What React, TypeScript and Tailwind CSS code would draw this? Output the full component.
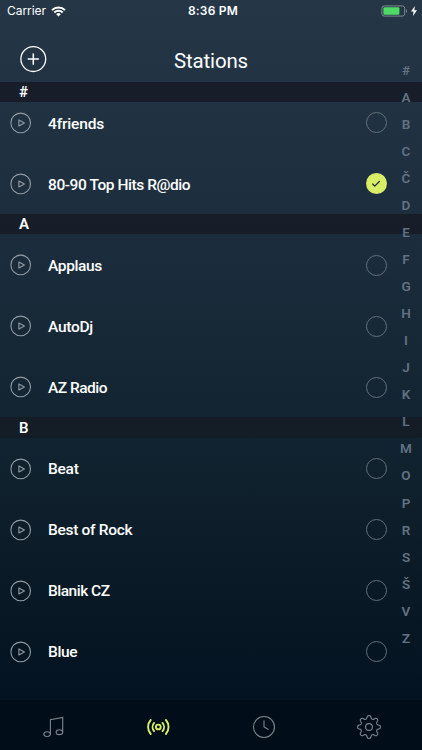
import { Check } from "lucide-react";

type Station = {
  name: string;
  tracking: string;
  selected?: boolean;
};

type Section = {
  letter: string;
  stations: Station[];
};

const sections: Section[] = [
  {
    letter: "#",
    stations: [
      { name: "4friends", tracking: "tracking-[-0.15px]" },
      { name: "80-90 Top Hits R@dio", tracking: "tracking-[-0.43px]", selected: true },
    ],
  },
  {
    letter: "A",
    stations: [
      { name: "Applaus", tracking: "tracking-[-0.36px]" },
      { name: "AutoDj", tracking: "tracking-[-0.3px]" },
      { name: "AZ Radio", tracking: "tracking-[-0.5px]" },
    ],
  },
  {
    letter: "B",
    stations: [
      { name: "Beat", tracking: "tracking-[-0.25px]" },
      { name: "Best of Rock", tracking: "tracking-[-0.3px]" },
      { name: "Blanik CZ", tracking: "tracking-[-0.5px]" },
      { name: "Blue", tracking: "tracking-[-0.4px]" },
    ],
  },
];

const indexLetters = "# A B C Č D E F G H I J K L M O P R S Š V Z".split(" ");

// Outline of a gear with eight rounded teeth, centred in a 24px box
const gearPath =
  Array.from({ length: 160 }, (_, i) => {
    const angle = (i / 160) * Math.PI * 2;
    const radius = 9.95 + 1.6 * Math.tanh(1.7 * Math.cos(angle * 8));
    const x = 12 + radius * Math.sin(angle);
    const y = 12 - radius * Math.cos(angle);
    return `${i === 0 ? "M" : "L"}${x.toFixed(2)} ${y.toFixed(2)}`;
  }).join("") + "Z";

function StatusBar() {
  return (
    <div className="grid h-[22px] grid-cols-3 items-center pl-[7px] pr-[5px] font-['Inter',sans-serif] text-white">
      <div className="flex items-center gap-[5px]">
        <span className="text-[12px] tracking-[-0.05px]">Carrier</span>
        <svg width="15" height="11" viewBox="0 0 15 11" fill="none" stroke="currentColor" strokeWidth="2">
          <path d="M1 4.1a9.2 9.2 0 0 1 13 0" />
          <path d="M3.3 6.5a5.9 5.9 0 0 1 8.4 0" />
          <path d="M7.5 10.6 5.2 8.2a3.3 3.3 0 0 1 4.6 0z" fill="currentColor" stroke="none" />
        </svg>
      </div>
      <span className="pl-[2px] text-center text-[12px] font-semibold tracking-[0.2px]">8:36 PM</span>
      <div className="flex items-center justify-end gap-[3px]">
        <svg width="27" height="12" viewBox="0 0 27 12" fill="none">
          <rect x="0.9" y="0.9" width="22.8" height="10.2" rx="2.4" stroke="#7d8993" />
          <rect x="2.4" y="2.3" width="16" height="7.4" rx="1" fill="#4cd964" />
          <path d="M25 4.2c1.4.5 1.4 3.1 0 3.6z" fill="#7d8993" />
        </svg>
        <svg width="6" height="10" viewBox="0 0 6 10" fill="currentColor">
          <path d="M3.9 0 0 5.6h2.6L1.9 10 6 4.2H3.3z" />
        </svg>
      </div>
    </div>
  );
}

function Header() {
  return (
    <div className="grid h-[60px] grid-cols-3 items-center">
      <div className="pl-[20px] pt-[14px]">
        <svg width="27" height="27" viewBox="0 0 27 27" fill="none" stroke="white" strokeWidth="1.3">
          <circle cx="13.3" cy="13.1" r="12.4" />
          <path d="M13.3 7.5v11.2M7.7 13.1h11.2" strokeWidth="1.5" />
        </svg>
      </div>
      <h1 className="pt-[17px] text-center text-[20.5px] leading-[26px] tracking-[-0.15px]">Stations</h1>
    </div>
  );
}

function StationRow({ station }: { station: Station }) {
  return (
    <li className="flex h-[61px] items-center pl-[10px] pr-[35.5px] pt-[0.6px]">
      <svg width="22" height="22" viewBox="0 0 22 22" fill="none" stroke="#929ba2" strokeLinejoin="round">
        <circle cx="10.7" cy="10.9" r="9.8" strokeWidth="1.1" />
        <path d="M8.9 7.9v6l5.5-3z" strokeWidth="1.1" />
      </svg>
      <span className={`ml-4 flex-1 pt-[3px] text-[15.5px] font-medium ${station.tracking}`}>{station.name}</span>
      {station.selected ? (
        <span className="flex size-[21px] items-center justify-center rounded-full bg-[#d9ee67]">
          <Check size={10} strokeWidth={3} color="#1c2b32" />
        </span>
      ) : (
        <span className="size-[21px] rounded-full border border-[#63707b]" />
      )}
    </li>
  );
}

function StationList() {
  return (
    <div>
      {sections.map((section, i) => (
        <section key={section.letter}>
          <h2 className="relative z-10 flex h-[20.4px] items-center bg-[#151b25]/85 pl-[19px] pt-px text-[15px] font-semibold">
            {section.letter}
          </h2>
          {/* The first row is scrolled partly under its header */}
          <ul className={i === 0 ? "-mt-[10.4px]" : ""}>
            {section.stations.map((station) => (
              <StationRow key={station.name} station={station} />
            ))}
          </ul>
        </section>
      ))}
    </div>
  );
}

function LetterIndex() {
  return (
    <nav className="absolute left-[396px] top-[56.4px] z-20 w-5 text-center text-[13.5px] font-semibold text-[#617283]">
      {indexLetters.map((letter) => (
        <div key={letter} className="flex h-[27.05px] items-center justify-center">
          {letter}
        </div>
      ))}
    </nav>
  );
}

function TabBar() {
  return (
    <div className="grid h-[50.5px] grid-cols-4 items-center justify-items-center bg-[#010e19] pt-[4px] text-[#7c868d]">
      <svg width="24" height="24" viewBox="0 0 24 24" fill="none" stroke="currentColor" strokeWidth="1.1">
        <path d="M9.4 18.9V4.8L21.7 2.4v14.4" />
        <ellipse cx="6.1" cy="19.1" rx="3.3" ry="2.4" />
        <ellipse cx="18.4" cy="17.2" rx="3.3" ry="2.4" />
      </svg>
      <svg width="24" height="24" viewBox="0 0 24 24" fill="none" stroke="#d9ee67" strokeWidth="1.9" strokeLinecap="round">
        <circle cx="12.3" cy="12" r="2.4" />
        <path d="M8.1 7.9a6.2 6.2 0 0 0 0 8.2M16.5 7.9a6.2 6.2 0 0 1 0 8.2" />
        <path d="M4.7 5a10.6 10.6 0 0 0 0 14M19.9 5a10.6 10.6 0 0 1 0 14" />
      </svg>
      <svg width="24" height="24" viewBox="0 0 24 24" fill="none" stroke="currentColor" strokeWidth="1.1">
        <circle cx="12" cy="12" r="10.5" />
        <path d="M12 5.5V12l4.5 2.6" />
      </svg>
      <svg width="24" height="24" viewBox="0 0 24 24" fill="none" stroke="currentColor" strokeWidth="1.1" strokeLinejoin="round">
        <circle cx="12" cy="12" r="3.4" />
        <path d={gearPath} />
      </svg>
    </div>
  );
}

export default function App() {
  return (
    <div className="relative flex h-[750px] w-[422px] flex-col overflow-hidden bg-[linear-gradient(180deg,#253746_0px,#203242_120px,#1b2c3c_250px,#132532_400px,#10212e_480px,#091925_590px,#041321_690px)] font-['Roboto',sans-serif] text-white">
      <StatusBar />
      <Header />
      <main className="flex-1">
        <StationList />
      </main>
      <LetterIndex />
      <TabBar />
    </div>
  );
}
